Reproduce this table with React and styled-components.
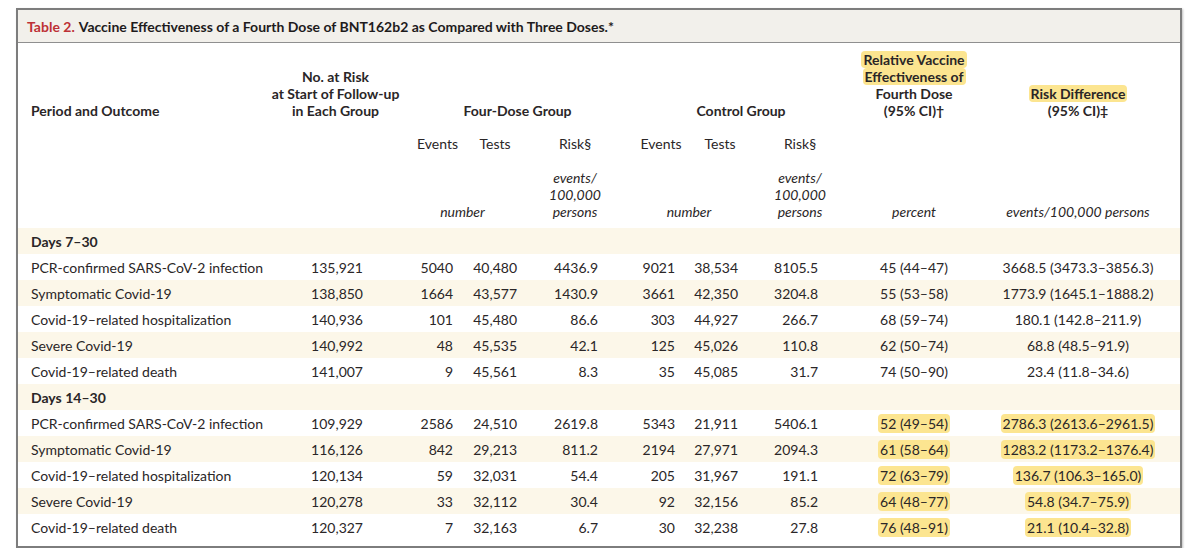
import styled, { createGlobalStyle } from 'styled-components';

const GlobalStyle = createGlobalStyle`
  body {
    margin: 0;
    background: #ffffff;
    font-family: Lato, "Liberation Sans", sans-serif;
    color: #2a2627;
  }
`

const Frame = styled.div`
  margin: 8px 0 0 16px;
  width: 1162px;
  border: 2px solid #7d7d7d;
  box-shadow: 1px 1px 2px rgba(0, 0, 0, 0.25);
  background: #ffffff;
`
const TitleBar = styled.div`
  height: 32px;
  display: flex;
  align-items: center;
  padding-left: 9px;
  background: #f2f0eb;
  border-bottom: 1px solid #8f8f8f;
  font-size: 14px;
  font-weight: 700;
  color: #1e1b1c;
`
const TitleNum = styled.span`
  color: #bd3136;
  margin-right: 4px;
`
const Table = styled.table`
  width: 1162px;
  table-layout: fixed;
  border-collapse: collapse;
  font-size: 14px;
  line-height: 17px;
  margin-bottom: 6px;
`
const Head = styled.th`
  padding: ${props => props.pt || 0}px ${props => props.pr || 0}px ${props => props.pb || 0}px ${props => props.pl || 0}px;
  text-align: ${props => props.align || 'center'};
  vertical-align: bottom;
  font-weight: ${props => props.bold ? 700 : 400};
  font-style: ${props => props.italic ? 'italic' : 'normal'};
  white-space: nowrap;
`
const Row = styled.tr`
  height: 26px;
  background: ${props => props.shade ? '#fcf7e9' : '#ffffff'};
`
const Cell = styled.td`
  padding: 0 ${props => props.pr || 0}px 0 ${props => props.pl || 0}px;
  text-align: ${props => props.align || 'right'};
  font-weight: ${props => props.bold ? 700 : 400};
  white-space: nowrap;
  vertical-align: middle;
`
const Mark = styled.span`
  background: #fce590;
  border-radius: 4px;
  padding: ${props => props.head ? '0 2px' : '1px 2px'};
`

const widths = [252, 135, 65, 50, 110, 62, 56, 104, 124, 204];
const pads = [0, 42, 17, 3, 32, 17, 10, 34, 0, 0];

const groups = [
  {
    title: 'Days 7–30',
    mark: false,
    rows: [
      ['PCR-confirmed SARS-CoV-2 infection', '135,921', '5040', '40,480', '4436.9', '9021', '38,534', '8105.5', '45 (44–47)', '3668.5 (3473.3–3856.3)'],
      ['Symptomatic Covid-19', '138,850', '1664', '43,577', '1430.9', '3661', '42,350', '3204.8', '55 (53–58)', '1773.9 (1645.1–1888.2)'],
      ['Covid-19–related hospitalization', '140,936', '101', '45,480', '86.6', '303', '44,927', '266.7', '68 (59–74)', '180.1 (142.8–211.9)'],
      ['Severe Covid-19', '140,992', '48', '45,535', '42.1', '125', '45,026', '110.8', '62 (50–74)', '68.8 (48.5–91.9)'],
      ['Covid-19–related death', '141,007', '9', '45,561', '8.3', '35', '45,085', '31.7', '74 (50–90)', '23.4 (11.8–34.6)'],
    ],
  },
  {
    title: 'Days 14–30',
    mark: true,
    rows: [
      ['PCR-confirmed SARS-CoV-2 infection', '109,929', '2586', '24,510', '2619.8', '5343', '21,911', '5406.1', '52 (49–54)', '2786.3 (2613.6–2961.5)'],
      ['Symptomatic Covid-19', '116,126', '842', '29,213', '811.2', '2194', '27,971', '2094.3', '61 (58–64)', '1283.2 (1173.2–1376.4)'],
      ['Covid-19–related hospitalization', '120,134', '59', '32,031', '54.4', '205', '31,967', '191.1', '72 (63–79)', '136.7 (106.3–165.0)'],
      ['Severe Covid-19', '120,278', '33', '32,112', '30.4', '92', '32,156', '85.2', '64 (48–77)', '54.8 (34.7–75.9)'],
      ['Covid-19–related death', '120,327', '7', '32,163', '6.7', '30', '32,238', '27.8', '76 (48–91)', '21.1 (10.4–32.8)'],
    ],
  },
];

function DataRow({ cells, shade, mark }) {
  return (
    <Row shade={shade}>
      {cells.map((c, i) => {
        if (i === 0) return <Cell key={i} align="left" pl={13}>{c}</Cell>;
        if (i >= 8) return <Cell key={i} align="center">{mark ? <Mark>{c}</Mark> : c}</Cell>;
        return <Cell key={i} pr={pads[i]}>{c}</Cell>;
      })}
    </Row>
  )
}

export default function App() {
  return (
    <>
      <GlobalStyle />
      <Frame>
        <TitleBar>
          <TitleNum>Table 2.</TitleNum>
          Vaccine Effectiveness of a Fourth Dose of BNT162b2 as Compared with Three Doses.*
        </TitleBar>
        <Table>
          <colgroup>
            {widths.map((w, i) => <col key={i} style={{ width: w }} />)}
          </colgroup>
          <thead>
            <tr>
              <Head bold align="left" pl={13} pt={8}>Period and Outcome</Head>
              <Head bold pt={8} pr={4}>No. at Risk<br />at Start of Follow-up<br />in Each Group</Head>
              <Head bold colSpan={3} pt={8}>Four-Dose Group</Head>
              <Head bold colSpan={3} pt={8}>Control Group</Head>
              <Head bold pt={8}>
                <Mark head>Relative Vaccine</Mark><br />
                <Mark head>Effectiveness of</Mark><br />
                Fourth Dose<br />(95% CI)†
              </Head>
              <Head bold pt={8}>
                <Mark head>Risk Difference</Mark><br />(95% CI)‡
              </Head>
            </tr>
            <tr>
              <Head colSpan={2} pt={16} />
              <Head pt={16}>Events</Head>
              <Head pt={16}>Tests</Head>
              <Head pt={16}>Risk§</Head>
              <Head pt={16}>Events</Head>
              <Head pt={16}>Tests</Head>
              <Head pt={16}>Risk§</Head>
              <Head colSpan={2} pt={16} />
            </tr>
            <tr>
              <Head colSpan={2} pt={17} pb={8} />
              <Head italic colSpan={2} pt={17} pb={8}>number</Head>
              <Head italic pt={17} pb={8}>events/<br />100,000<br />persons</Head>
              <Head italic colSpan={2} pt={17} pb={8}>number</Head>
              <Head italic pt={17} pb={8}>events/<br />100,000<br />persons</Head>
              <Head italic pt={17} pb={8}>percent</Head>
              <Head italic pt={17} pb={8}>events/100,000 persons</Head>
            </tr>
          </thead>
          <tbody>
            {groups.map(g => [
              <Row key={g.title} shade>
                <Cell bold align="left" pl={13} colSpan={10}>{g.title}</Cell>
              </Row>,
              ...g.rows.map((r, i) => (
                <DataRow key={g.title + i} cells={r} shade={i % 2 === 1} mark={g.mark} />
              )),
            ])}
          </tbody>
        </Table>
      </Frame>
    </>
  )
}
